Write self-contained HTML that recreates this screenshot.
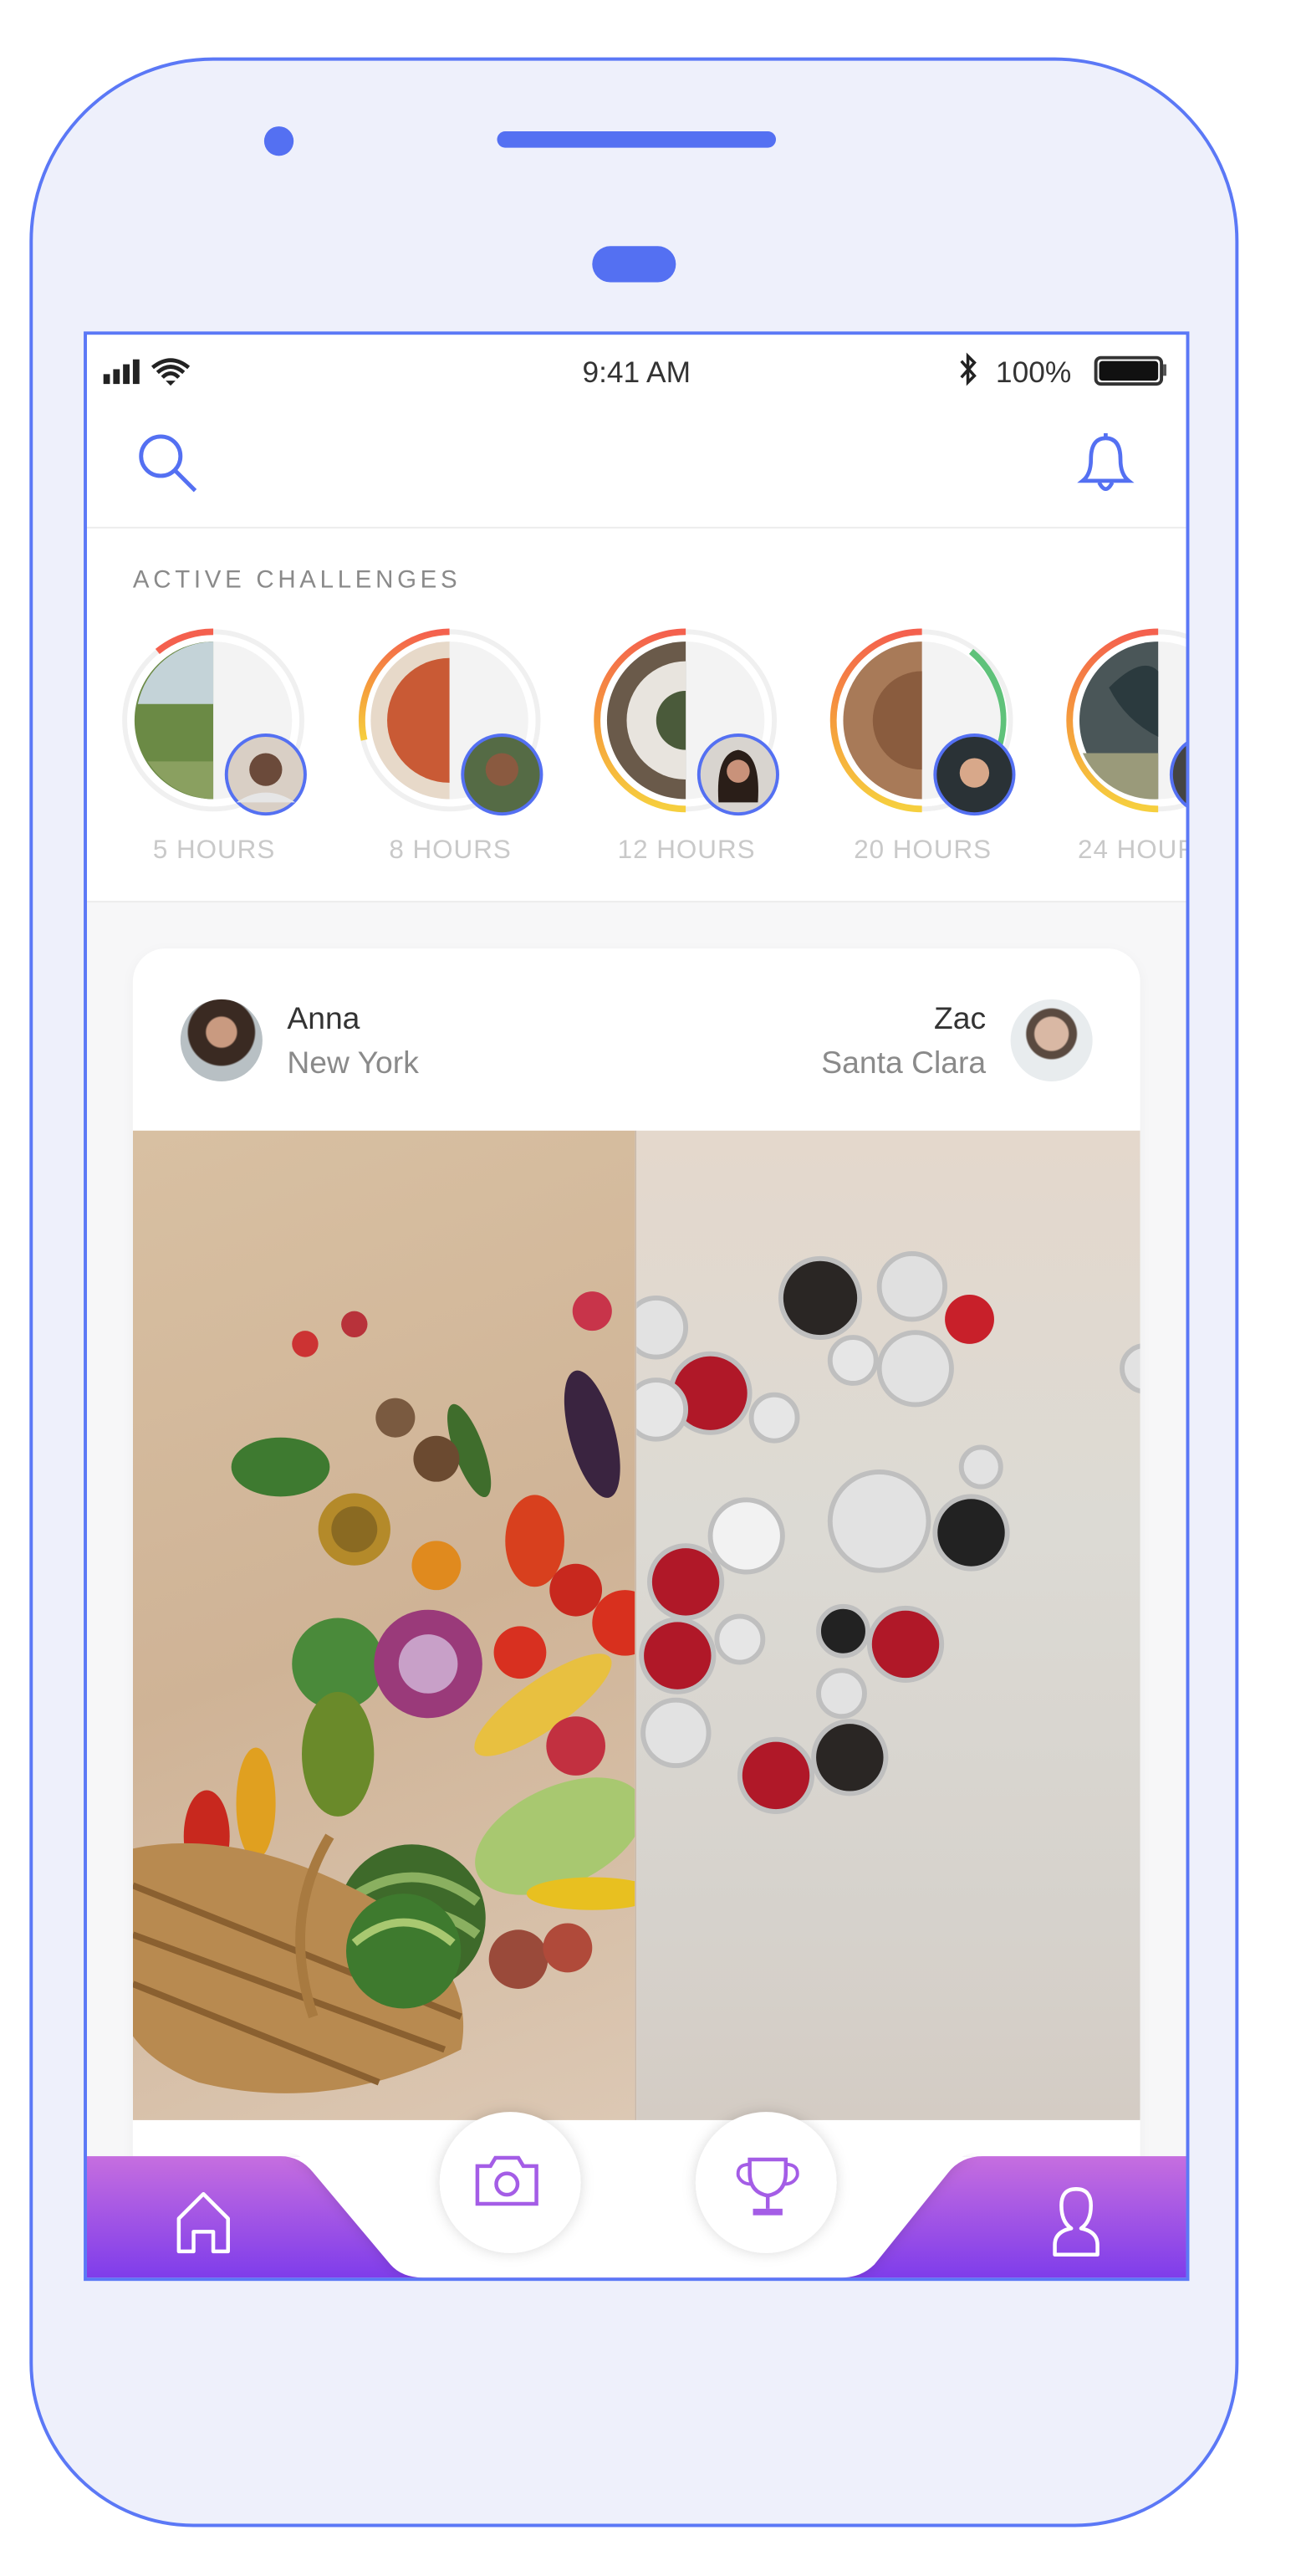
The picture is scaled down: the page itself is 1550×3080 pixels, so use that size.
<!DOCTYPE html>
<html><head><meta charset="utf-8">
<style>
html,body{margin:0;padding:0;width:1550px;height:3079px;overflow:hidden;background:#fff;}
#s{position:absolute;left:0;top:0;width:790px;height:1570px;transform:scale(1.962);transform-origin:0 0;font-family:"Liberation Sans",sans-serif;}
.a{position:absolute;}
</style></head><body>
<div id="s">
<div class="a" style="left:18px;top:35px;width:733px;height:1501px;border:2px solid #5b78f6;border-radius:112px 112px 100px 100px;background:#eef0fb;"></div>
<div class="a" style="left:161px;top:77px;width:18px;height:18px;border-radius:50%;background:#5470f2;"></div>
<div class="a" style="left:303px;top:80px;width:170px;height:10px;border-radius:5px;background:#5470f2;"></div>
<div class="a" style="left:361px;top:150px;width:51px;height:22px;border-radius:11px;background:#5470f2;"></div>
<div class="a" style="left:51px;top:202px;width:670px;height:1184px;border:2px solid #5b78f6;background:#f7f7f8;overflow:hidden;">
  <div class="a" style="left:0;top:0;width:670px;height:345px;background:#fff;border-bottom:1px solid #ececec;"></div>
  <div class="a" style="left:0;top:117px;width:670px;height:1px;background:#ececec;"></div>
  <svg class="a" style="left:10px;top:12px" width="70" height="22" viewBox="0 0 70 22">
    <rect x="0" y="12" width="4" height="6" fill="#222"/><rect x="6" y="9" width="4" height="9" fill="#222"/><rect x="12" y="6" width="4" height="12" fill="#222"/><rect x="18" y="3" width="4" height="15" fill="#222"/>
    <path d="M38 16 L41 19 L44 16 Z" fill="#222"/><path d="M33 11 Q41 4 49 11" stroke="#222" stroke-width="2.4" fill="none"/><path d="M36 14 Q41 9 46 14" stroke="#222" stroke-width="2.4" fill="none"/><path d="M30 8 Q41 -1 52 8" stroke="#222" stroke-width="2.4" fill="none"/>
  </svg>
  <div class="a" style="left:0;width:670px;top:13px;text-align:center;font-size:18px;color:#333;">9:41 AM</div>
  <svg class="a" style="left:531px;top:10px" width="12" height="22" viewBox="0 0 12 22"><path d="M2 6 L10 15 L6 19 V3 L10 7 L2 16" stroke="#222" stroke-width="1.8" fill="none"/></svg>
  <div class="a" style="left:554px;top:13px;font-size:18px;color:#333;">100%</div>
  <div class="a" style="left:614px;top:13px;width:38px;height:14px;border:2px solid #333;border-radius:4px;"><div style="margin:1px;height:12px;background:#111;border-radius:2px"></div></div>
  <div class="a" style="left:656px;top:18px;width:2px;height:7px;background:#555;"></div>
  <svg class="a" style="left:30px;top:59px" width="40" height="40" viewBox="0 0 40 40"><circle cx="15" cy="15" r="12" stroke="#5470f2" stroke-width="2.5" fill="none"/><path d="M24 24 L36 36" stroke="#5470f2" stroke-width="2.5"/></svg>
  <svg class="a" style="left:602px;top:58px" width="40" height="42" viewBox="0 0 40 42"><path d="M5 31 Q10 27 10 18 Q10 5 19 5 Q28 5 28 18 Q28 27 33 31 Z" stroke="#5470f2" stroke-width="2.4" fill="none"/><path d="M15 32 Q19 40 23 32" stroke="#5470f2" stroke-width="2.4" fill="none"/><path d="M19 2 V5" stroke="#5470f2" stroke-width="2.4"/></svg>
  <div class="a" style="left:28px;top:141px;font-size:15px;letter-spacing:2.4px;color:#8a8a8a;">ACTIVE CHALLENGES</div>
  <svg class="a" style="left:0;top:170px" width="670" height="130" viewBox="0 0 670 130">
    <defs>
      <linearGradient id="rg" x1="0" y1="0" x2="0" y2="1"><stop offset="0" stop-color="#f4604e"/><stop offset="0.5" stop-color="#f59c3c"/><stop offset="1" stop-color="#f6cf3e"/></linearGradient>
    </defs>
    <g transform="translate(77,65)">
      <circle r="54" fill="none" stroke="#f0f0f0" stroke-width="3"/>
      <path d="M-34 -42 A54 54 0 0 1 0 -54" stroke="#f4604e" stroke-width="4" fill="none"/>
      <circle r="48" fill="#f3f3f3"/><path d="M0 -48 A48 48 0 0 0 0 48 Z" fill="#6b8a45"/><path d="M0 -48 A48 48 0 0 0 -46 -10 L0 -10Z" fill="#c4d3d8"/><path d="M-40 25 L0 25 L0 48 A48 48 0 0 1 -40 25Z" fill="#8aa060"/>
      <circle cx="32" cy="33" r="25" fill="#5470f2"/><circle cx="32" cy="33" r="23" fill="#d9cfc5"/><circle cx="32" cy="30" r="10" fill="#6b4a3a"/><path d="M14 50 Q32 38 50 50" fill="#e6e6e6"/>
    </g>
    <g transform="translate(221,65)">
      <circle r="54" fill="none" stroke="#f0f0f0" stroke-width="3"/>
      <path d="M-52 12 A54 54 0 0 1 0 -54" stroke="url(#rg)" stroke-width="4" fill="none"/>
      <circle r="48" fill="#f3f3f3"/><path d="M0 -48 A48 48 0 0 0 0 48 Z" fill="#e7d9c9"/><path d="M0 -38 A38 38 0 0 0 0 38 Z" fill="#c95a35"/>
      <circle cx="32" cy="33" r="25" fill="#5470f2"/><circle cx="32" cy="33" r="23" fill="#556b45"/><circle cx="32" cy="30" r="10" fill="#8a5a40"/>
    </g>
    <g transform="translate(365,65)">
      <circle r="54" fill="none" stroke="#f0f0f0" stroke-width="3"/>
      <path d="M0 -54 A54 54 0 0 0 0 54" stroke="url(#rg)" stroke-width="4" fill="none"/>
      <circle r="48" fill="#f3f3f3"/><path d="M0 -48 A48 48 0 0 0 0 48 Z" fill="#6a5a4a"/><path d="M0 -36 A36 36 0 0 0 0 36 Z" fill="#e8e4de"/><path d="M0 -18 A18 18 0 0 0 0 18 Z" fill="#4a5a3a"/>
      <circle cx="32" cy="33" r="25" fill="#5470f2"/><circle cx="32" cy="33" r="23" fill="#d8d4cf"/><path d="M20 50 Q18 20 32 18 Q46 20 44 50Z" fill="#2a1e18"/><circle cx="32" cy="31" r="7" fill="#c9927a"/>
    </g>
    <g transform="translate(509,65)">
      <circle r="54" fill="none" stroke="#f0f0f0" stroke-width="3"/>
      <path d="M0 -54 A54 54 0 0 0 0 54" stroke="url(#rg)" stroke-width="4" fill="none"/>
      <path d="M30 -42 A54 54 0 0 1 40 30" stroke="#5fc27a" stroke-width="4" fill="none"/>
      <circle r="48" fill="#f3f3f3"/><path d="M0 -48 A48 48 0 0 0 0 48 Z" fill="#a87a58"/><path d="M0 -30 A30 30 0 0 0 0 30 Z" fill="#8a5c3e"/>
      <circle cx="32" cy="33" r="25" fill="#5470f2"/><circle cx="32" cy="33" r="23" fill="#2a3236"/><circle cx="32" cy="32" r="9" fill="#d8a88a"/>
    </g>
    <g transform="translate(653,65)">
      <circle r="54" fill="none" stroke="#f0f0f0" stroke-width="3"/>
      <path d="M0 -54 A54 54 0 0 0 0 54" stroke="url(#rg)" stroke-width="4" fill="none"/>
      <circle r="48" fill="#f3f3f3"/><path d="M0 -48 A48 48 0 0 0 0 48 Z" fill="#4a5658"/><path d="M-30 -20 Q-10 -40 0 -30 L0 10 Q-20 0 -30 -20Z" fill="#2b3a3e"/><path d="M-46 20 L0 20 L0 48 A48 48 0 0 1 -46 20Z" fill="#9a9a7a"/>
      <circle cx="32" cy="33" r="25" fill="#5470f2"/><circle cx="32" cy="33" r="23" fill="#444"/>
    </g>
  </svg>
  <div class="a" style="top:306px;left:25px;width:105px;text-align:center;font-size:16px;color:#c9c9c9;letter-spacing:0.5px;">5 HOURS</div>
  <div class="a" style="top:306px;left:169px;width:105px;text-align:center;font-size:16px;color:#c9c9c9;letter-spacing:0.5px;">8 HOURS</div>
  <div class="a" style="top:306px;left:313px;width:105px;text-align:center;font-size:16px;color:#c9c9c9;letter-spacing:0.5px;">12 HOURS</div>
  <div class="a" style="top:306px;left:457px;width:105px;text-align:center;font-size:16px;color:#c9c9c9;letter-spacing:0.5px;">20 HOURS</div>
  <div class="a" style="top:306px;left:604px;width:105px;font-size:16px;color:#c9c9c9;letter-spacing:0.5px;">24 HOURS</div>
  <div class="a" style="left:28px;top:374px;width:614px;height:760px;background:#fff;border-radius:20px;box-shadow:0 2px 8px rgba(0,0,0,0.04);overflow:hidden;">
    <div class="a" style="left:29px;top:31px;width:50px;height:50px;border-radius:50%;background:radial-gradient(circle at 50% 40%,#c99a80 0 9px,#3a2a22 10px 20px,#b8c0c4 21px);"></div>
    <div class="a" style="left:94px;top:33px;font-size:19px;color:#333;">Anna</div>
    <div class="a" style="left:94px;top:60px;font-size:19px;color:#8a8a8a;">New York</div>
    <div class="a" style="right:94px;top:33px;font-size:19px;color:#333;text-align:right;">Zac</div>
    <div class="a" style="right:94px;top:60px;font-size:19px;color:#8a8a8a;text-align:right;">Santa Clara</div>
    <div class="a" style="left:535px;top:31px;width:50px;height:50px;border-radius:50%;background:radial-gradient(circle at 50% 42%,#d9b8a4 0 10px,#5a4a40 11px 15px,#e8ecee 16px);"></div>
    <div class="a" style="left:0;top:111px;width:306px;height:604px;background:linear-gradient(160deg,#d8c0a2,#cfb396 50%,#dcc8b4);overflow:hidden;">
      <svg width="306" height="604" viewBox="0 0 306 604">
        <circle cx="280" cy="110" r="12" fill="#c8344a"/><circle cx="135" cy="118" r="8" fill="#b8323a"/><circle cx="105" cy="130" r="8" fill="#c33"/>
        <ellipse cx="280" cy="185" rx="14" ry="40" fill="#3a2440" transform="rotate(-15 280 185)"/>
        <ellipse cx="205" cy="195" rx="9" ry="30" fill="#3f6d2c" transform="rotate(-20 205 195)"/>
        <circle cx="185" cy="200" r="14" fill="#6b4a30"/><circle cx="160" cy="175" r="12" fill="#7a5a40"/>
        <ellipse cx="90" cy="205" rx="30" ry="18" fill="#3e7a30"/>
        <circle cx="135" cy="243" r="22" fill="#b48a2a"/><circle cx="135" cy="243" r="14" fill="#8a6a22"/>
        <ellipse cx="245" cy="250" rx="18" ry="28" fill="#d8401e"/><circle cx="185" cy="265" r="15" fill="#e08a1e"/>
        <circle cx="270" cy="280" r="16" fill="#c8281e"/><circle cx="300" cy="300" r="20" fill="#d8301e"/>
        <circle cx="125" cy="325" r="28" fill="#4a8a3a"/><circle cx="180" cy="325" r="33" fill="#9a3a7a"/><circle cx="180" cy="325" r="18" fill="#c8a0c8"/>
        <circle cx="236" cy="318" r="16" fill="#d83020"/><ellipse cx="250" cy="350" rx="50" ry="15" fill="#e8c040" transform="rotate(-35 250 350)"/>
        <ellipse cx="125" cy="380" rx="22" ry="38" fill="#6a8a2a"/><circle cx="270" cy="375" r="18" fill="#c23040"/>
        <ellipse cx="75" cy="410" rx="12" ry="34" fill="#e0a020"/><ellipse cx="45" cy="430" rx="14" ry="28" fill="#c8281e"/>
        <ellipse cx="260" cy="430" rx="55" ry="30" fill="#a8c870" transform="rotate(-25 260 430)"/>
        <circle cx="170" cy="480" r="45" fill="#3e6a2a"/><path d="M130 470 Q170 440 210 470 M130 490 Q170 460 210 490" stroke="#8ab060" stroke-width="6" fill="none"/>
        <circle cx="235" cy="505" r="18" fill="#9a4a3a"/><circle cx="265" cy="498" r="15" fill="#b04a3a"/><ellipse cx="280" cy="465" rx="40" ry="10" fill="#e8c020"/>
        <path d="M-10 440 Q60 420 150 470 Q210 510 200 560 Q120 600 40 580 Q-10 560 -10 520Z" fill="#b88a50"/>
        <path d="M0 460 L200 540 M0 490 L190 560 M0 520 L150 580" stroke="#8a6030" stroke-width="4"/>
        <path d="M120 430 Q90 480 110 540" stroke="#a87a40" stroke-width="6" fill="none"/>
        <circle cx="165" cy="500" r="35" fill="#3e7a2e"/><path d="M135 495 Q165 470 195 495" stroke="#a8c870" stroke-width="5" fill="none"/>
      </svg>
    </div>
    <div class="a" style="left:306px;top:111px;width:1px;height:604px;background:#c9b8a8;"></div>
    <div class="a" style="left:307px;top:111px;width:307px;height:604px;background:linear-gradient(180deg,#e4d8cc,#dcdad4 40%,#d6d2cc 80%,#d4ccc4);overflow:hidden;">
      <svg width="307" height="604" viewBox="0 0 307 604">
        <g stroke="#bfbfbf" stroke-width="3">
        <circle cx="112" cy="102" r="24" fill="#2a2624"/><circle cx="168" cy="95" r="20" fill="#e0e0e0"/><circle cx="203" cy="115" r="15" fill="#c8202a" stroke="none"/>
        <circle cx="12" cy="120" r="18" fill="#e2e2e2"/><circle cx="132" cy="140" r="14" fill="#e6e6e6"/><circle cx="170" cy="145" r="22" fill="#e2e2e2"/>
        <circle cx="45" cy="160" r="24" fill="#b01828"/><circle cx="84" cy="175" r="14" fill="#e6e6e6"/><circle cx="12" cy="170" r="18" fill="#e6e6e6"/>
        <circle cx="67" cy="247" r="22" fill="#f2f2f2"/><circle cx="148" cy="238" r="30" fill="#e2e2e2"/><circle cx="204" cy="245" r="22" fill="#222"/><circle cx="210" cy="205" r="12" fill="#e2e2e2"/>
        <circle cx="30" cy="275" r="22" fill="#b01828"/><circle cx="25" cy="320" r="22" fill="#b01828"/><circle cx="63" cy="310" r="14" fill="#e6e6e6"/>
        <circle cx="126" cy="305" r="15" fill="#222"/><circle cx="164" cy="313" r="22" fill="#b01828"/><circle cx="125" cy="343" r="14" fill="#e2e2e2"/>
        <circle cx="24" cy="367" r="20" fill="#e2e2e2"/><circle cx="130" cy="382" r="22" fill="#2a2624"/><circle cx="85" cy="393" r="22" fill="#b01828"/>
        <circle cx="310" cy="145" r="14" fill="#e2e2e2"/>
        </g>
      </svg>
    </div>
  </div>
  <svg class="a" style="left:0;top:1060px" width="670" height="128" viewBox="0 0 670 128">
    <defs><linearGradient id="pg" x1="0" y1="0" x2="0" y2="1"><stop offset="0" stop-color="#c66edf"/><stop offset="1" stop-color="#7b3aeb"/></linearGradient>
    <filter id="sh" x="-30%" y="-30%" width="160%" height="160%"><feDropShadow dx="0" dy="0" stdDeviation="4" flood-color="#000" flood-opacity="0.15"/></filter></defs>
    <g transform="translate(0,48)">
    <rect x="0" y="2" width="670" height="78" fill="url(#pg)"/>
    <path d="M118 2 Q130 2 138 12 L185 68 Q192 76 205 76 L460 76 Q472 76 480 68 L525 12 Q533 2 546 2" fill="#fff" filter="url(#sh)"/>
    <path d="M110 -2 Q130 -2 140 10 L187 66 Q194 74 207 74 L458 74 Q470 74 478 66 L523 10 Q533 -2 556 -2Z" fill="#fff"/>
    <rect x="28" y="-20" width="614" height="20" fill="#fff"/>
    <circle cx="258" cy="18" r="43" fill="#fff" filter="url(#sh)"/>
    <circle cx="414" cy="18" r="43" fill="#fff" filter="url(#sh)"/>
    <path d="M238 8 h8 l3 -5 h14 l3 5 h8 v23 h-36 Z" fill="none" stroke="#a45de6" stroke-width="2.3"/>
    <circle cx="256" cy="19" r="6.5" fill="none" stroke="#a45de6" stroke-width="2.3"/>
    <path d="M404 4 h22 v8 q0 12 -11 14 q-11 -2 -11 -14Z" fill="none" stroke="#a45de6" stroke-width="2.3"/>
    <path d="M404 7 q-8 0 -7 7 q2 5 8 5 M426 7 q8 0 7 7 q-2 5 -8 5" fill="none" stroke="#a45de6" stroke-width="2"/>
    <path d="M415 26 v8" stroke="#a45de6" stroke-width="2.3"/><rect x="406" y="34" width="18" height="4" fill="#a45de6"/>
    <path d="M56 60 V40 L71 25 L86 40 V60 H77 V48 H65 V60 Z" fill="none" stroke="#fff" stroke-width="2.3" stroke-linejoin="round"/>
    <path d="M590 62 v-6 q0 -8 10 -10 q-6 -4 -6 -14 q0 -10 9 -10 q9 0 9 10 q0 10 -6 14 q10 2 10 10 v6 Z" fill="none" stroke="#fff" stroke-width="2.3" stroke-linejoin="round"/>
    </g>
  </svg>
</div>
</div>
</body></html>
